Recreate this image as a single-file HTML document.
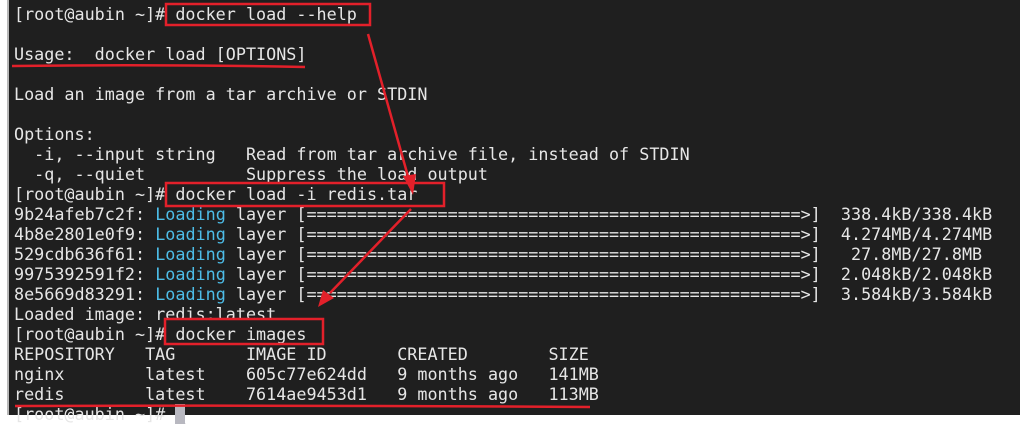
<!DOCTYPE html>
<html><head><meta charset="utf-8"><style>
html,body{margin:0;padding:0;width:1020px;height:415px;overflow:hidden;background:#fff;}
#term{position:absolute;left:9px;top:0;width:1011px;height:415px;background:#1f1f1f;}
#edge{position:absolute;left:7px;top:0;width:2px;height:415px;background:#b8b8b8;}
pre{position:absolute;left:14px;top:-16px;margin:0;font-family:"DejaVu Sans Mono","Liberation Mono",monospace;font-size:16.75px;line-height:20px;color:#e6e6e6;white-space:pre;}
.c{color:#4dbde8;}
.cur{background:#b8b8c0;color:#b8b8c0;}
svg{position:absolute;left:0;top:0;}
</style></head><body>
<div id="term"></div><div id="edge"></div>
<pre>

[root@aubin ~]# docker load --help

Usage:  docker load [OPTIONS]

Load an image from a tar archive or STDIN

Options:
  -i, --input string   Read from tar archive file, instead of STDIN
  -q, --quiet          Suppress the load output
[root@aubin ~]# docker load -i redis.tar
9b24afeb7c2f: <span class="c">Loading</span> layer [=================================================>]  338.4kB/338.4kB
4b8e2801e0f9: <span class="c">Loading</span> layer [=================================================>]  4.274MB/4.274MB
529cdb636f61: <span class="c">Loading</span> layer [=================================================>]   27.8MB/27.8MB
9975392591f2: <span class="c">Loading</span> layer [=================================================>]  2.048kB/2.048kB
8e5669d83291: <span class="c">Loading</span> layer [=================================================>]  3.584kB/3.584kB
Loaded image: redis:latest
[root@aubin ~]# docker images
REPOSITORY   TAG       IMAGE ID       CREATED        SIZE
nginx        latest    605c77e624dd   9 months ago   141MB
redis        latest    7614ae9453d1   9 months ago   113MB
[root@aubin ~]# <span class="cur">_</span>
</pre>
<svg width="1020" height="415" viewBox="0 0 1020 415">
<g fill="none" stroke="#e3202a" stroke-width="2.5">
<rect x="166" y="4" width="204" height="21"/>
<rect x="166" y="183" width="278" height="23"/>
<rect x="165" y="319" width="158" height="25"/>
<path d="M12 66 Q150 64 305 67"/>
<path d="M15 406 Q300 405 590 407"/>
<path d="M368 34 L409 180"/>
<path d="M411 209 L330 293"/>
</g>
<g fill="#e3202a">
<polygon points="403,176 416,174 413,195"/>
<polygon points="323,290 334,298 318,307"/>
</g>
</svg>
</body></html>
